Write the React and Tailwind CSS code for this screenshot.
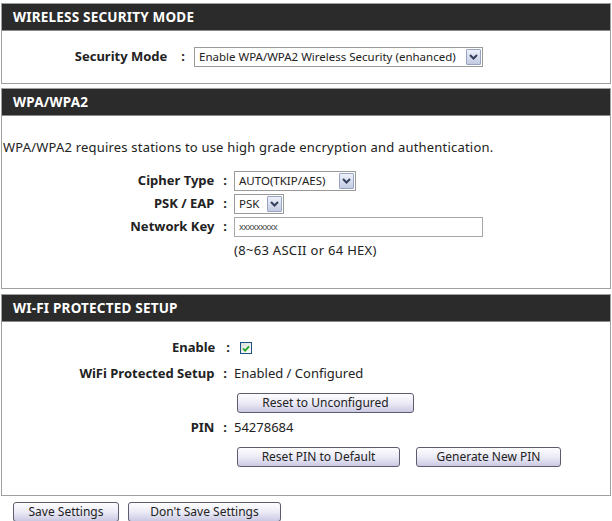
import React from "react";

const font = { fontFamily: "Tahoma, 'Noto Sans', 'DejaVu Sans', sans-serif" };

function Section({ title, children, bodyClass }) {
  return (
    <div className="border border-[#a0a0a0] bg-white">
      <div className="h-[27px] bg-[#2b2b2b] border-b border-[#8a8a8a] flex items-center pl-[11px] text-white font-bold text-[13.5px] tracking-[0.2px]">
        {title}
      </div>
      <div className={bodyClass}>{children}</div>
    </div>
  );
}

function Label({ text, width, gapBefore = 9, gapAfter = 7 }) {
  return (
    <div
      className="flex justify-end items-center font-bold text-[13px] text-[#222] shrink-0"
      style={{ width }}
    >
      <span>{text}</span>
      <span style={{ marginLeft: gapBefore, marginRight: gapAfter }}>:</span>
    </div>
  );
}

function Arrow() {
  return (
    <div className="w-[15px] h-[16px] border border-[#98a4c2] rounded-[1px] bg-gradient-to-b from-[#eef1fa] to-[#c3cbe3] flex items-center justify-center">
      <svg width="9" height="6" viewBox="0 0 9 6">
        <path d="M1 1 L4.5 4.5 L8 1" fill="none" stroke="#34405e" strokeWidth="2" />
      </svg>
    </div>
  );
}

function Select({ value, width }) {
  return (
    <div
      className="h-[20px] border border-[#9a9a9a] bg-white flex items-center justify-between pl-[4px] pr-[1px] text-[11.5px] text-[#222]"
      style={{ width }}
    >
      <span className="whitespace-nowrap">{value}</span>
      <Arrow />
    </div>
  );
}

function Button({ children, width }) {
  return (
    <div
      className="h-[20px] border border-[#5c5c6e] rounded-[3px] bg-gradient-to-b from-[#fdfdff] via-[#ecebf6] to-[#cbc9e3] flex items-center justify-center text-[12px] text-[#222]"
      style={{ width }}
    >
      {children}
    </div>
  );
}

export default function App() {
  return (
    <div className="w-[612px] h-[521px] bg-white overflow-hidden pt-[3px] px-[1px]" style={font}>
      <Section title="WIRELESS SECURITY MODE" bodyClass="h-[52px] flex items-center">
        <div className="flex items-center">
          <Label text="Security Mode" width={192} gapBefore={14} gapAfter={9} />
          <Select value="Enable WPA/WPA2 Wireless Security (enhanced)" width={289} />
        </div>
      </Section>

      <div className="mt-[4px]">
        <Section title="WPA/WPA2" bodyClass="h-[172px] pt-[22px] flex flex-col">
          <p className="h-[18px] leading-[18px] text-[13px] tracking-[0.2px] text-[#222] pl-[1px]">
            WPA/WPA2 requires stations to use high grade encryption and authentication.
          </p>
          <div className="mt-[15px] flex items-center h-[20px]">
            <Label text="Cipher Type" width={232} />
            <Select value="AUTO(TKIP/AES)" width={122} />
          </div>
          <div className="mt-[3px] flex items-center h-[20px]">
            <Label text="PSK / EAP" width={232} />
            <Select value="PSK" width={50} />
          </div>
          <div className="mt-[3px] flex items-center h-[20px]">
            <Label text="Network Key" width={232} />
            <div className="w-[249px] h-[20px] border border-[#a8a8a8] bg-white flex items-center pl-[4px] text-[9px] text-[#444] tracking-[-0.5px]">
              xxxxxxxxx
            </div>
          </div>
          <div className="mt-[4px] flex items-center h-[20px] pl-[232px] text-[13px] tracking-[0.3px] text-[#222]">
            (8~63 ASCII or 64 HEX)
          </div>
        </Section>
      </div>

      <div className="mt-[5px]">
        <Section title="WI-FI PROTECTED SETUP" bodyClass="h-[173px] pt-[16px] flex flex-col">
          <div className="flex items-center h-[20px]">
            <Label text="Enable" width={238} gapBefore={11} gapAfter={10} />
            <div className="w-[12px] h-[12px] border border-[#1c5180] bg-gradient-to-br from-[#dcdcd7] to-[#ffffff] flex items-center justify-center">
              <svg width="8" height="7" viewBox="0 0 9 8">
                <path d="M1 4 L3.5 6.5 L8 1.5" fill="none" stroke="#21a121" strokeWidth="2" />
              </svg>
            </div>
          </div>
          <div className="mt-[6px] flex items-center h-[20px]">
            <Label text="WiFi Protected Setup" width={232} />
            <span className="text-[13px] text-[#222]">Enabled / Configured</span>
          </div>
          <div className="mt-[9px] pl-[235px]">
            <Button width={177}>Reset to Unconfigured</Button>
          </div>
          <div className="mt-[5px] flex items-center h-[20px]">
            <Label text="PIN" width={232} />
            <span className="text-[13px] text-[#222]">54278684</span>
          </div>
          <div className="mt-[9px] pl-[235px] flex gap-[16px]">
            <Button width={163}>Reset PIN to Default</Button>
            <Button width={145}>Generate New PIN</Button>
          </div>
        </Section>
      </div>

      <div className="flex gap-[9px] pl-[12px] mt-[6px]">
        <Button width={106}>Save Settings</Button>
        <Button width={153}>Don't Save Settings</Button>
      </div>
    </div>
  );
}
